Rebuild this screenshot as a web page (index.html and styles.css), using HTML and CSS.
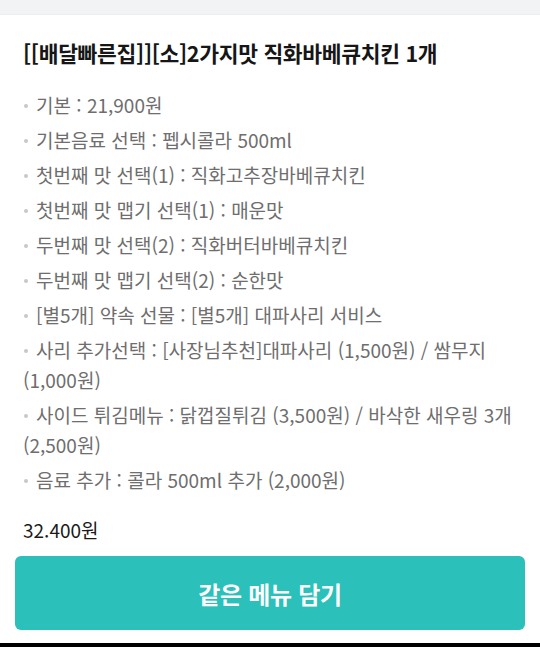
FILE: index.html
```html
<!DOCTYPE html>
<html lang="ko">
<head>
<meta charset="utf-8">
<link rel="stylesheet" href="styles.css">
</head>
<body>
<div class="page">
  <div class="topband"></div>
  <main class="content">
    <h1 class="title">[[배달빠른집]][소]2가지맛 직화바베큐치킨 1개</h1>
    <ul class="options">
      <li>기본 : 21,900원</li>
      <li>기본음료 선택 : 펩시콜라 500ml</li>
      <li>첫번째 맛 선택(1) : 직화고추장바베큐치킨</li>
      <li>첫번째 맛 맵기 선택(1) : 매운맛</li>
      <li>두번째 맛 선택(2) : 직화버터바베큐치킨</li>
      <li>두번째 맛 맵기 선택(2) : 순한맛</li>
      <li>[별5개] 약속 선물 : [별5개] 대파사리 서비스</li>
      <li>사리 추가선택 : [사장님추천]대파사리 (1,500원) / 쌈무지 (1,000원)</li>
      <li>사이드 튀김메뉴 : 닭껍질튀김 (3,500원) / 바삭한 새우링 3개 (2,500원)</li>
      <li>음료 추가 : 콜라 500ml 추가 (2,000원)</li>
    </ul>
    <div class="price">32.400원</div>
    <button class="add-btn">같은 메뉴 담기</button>
  </main>
  <div class="bottomband"></div>
</div>
</body>
</html>
```
FILE: styles.css
```css
* { box-sizing: border-box; }
html, body { margin: 0; padding: 0; background: #fff; }
body {
  font-family: "Noto Sans CJK KR", "Noto Sans", sans-serif;
  width: 540px;
  height: 647px;
  overflow: hidden;
}
.page {
  display: flex;
  flex-direction: column;
  height: 647px;
}
.topband {
  height: 15px;
  background: #f2f3f5;
  border-bottom: 1px solid #eceef0;
}
.content {
  flex: 1;
  padding: 23px 15px 0 15px;
  display: flex;
  flex-direction: column;
}
.title {
  margin: 0 0 22px 8px;
  font-size: 21.5px;
  line-height: 30px;
  font-weight: 700;
  color: #161616;
  letter-spacing: -0.3px;
}
.options {
  list-style: none;
  margin: 0 0 0 8px;
  padding: 0;
  display: flex;
  flex-direction: column;
  gap: 5px;
}
.options li {
  font-size: 19px;
  line-height: 30px;
  color: #6e6e6e;
  word-break: keep-all;
}
.options li::before {
  content: "";
  display: inline-block;
  width: 4px;
  height: 4px;
  border-radius: 50%;
  background: #c8c8c8;
  vertical-align: middle;
  margin: 0 8px 3px 1px;
}
.price {
  margin: 22px 0 0 8px;
  font-size: 19px;
  line-height: 26px;
  color: #1a1a1a;
}
.add-btn {
  margin-top: 13px;
  height: 74px;
  width: 510px;
  border: none;
  border-radius: 6px;
  background: #2bc0ba;
  color: #fff;
  font-family: inherit;
  font-size: 24px;
  font-weight: 700;
  letter-spacing: -0.3px;
}
.bottomband {
  height: 4px;
  background: #000;
}
```
